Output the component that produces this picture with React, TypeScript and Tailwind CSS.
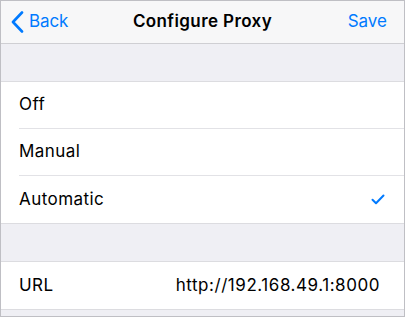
import React from 'react';

const options = ['Off', 'Manual', 'Automatic'];

const App: React.FC = () => {
  const selected = 'Automatic';

  return (
    <div
      className="w-[405px] h-[317px] border border-[#bfbfc4] bg-[#efeff4] overflow-hidden text-[17px] text-black"
      style={{ fontFamily: 'Inter, "Noto Sans", sans-serif' }}
    >
      <div className="h-[43px] bg-[#f7f7f8] border-b border-[#cfcfd3] flex items-center justify-between relative">
        <button className="flex items-center text-[#007aff] pl-[10px] gap-[5px]">
          <svg width="13" height="22" viewBox="0 0 13 22" fill="none">
            <path d="M11 1.5L2 11l9 9.5" stroke="#007aff" strokeWidth="2.6" strokeLinecap="round" strokeLinejoin="round" />
          </svg>
          <span className="tracking-[-0.1px]">Back</span>
        </button>
        <div className="absolute left-0 right-0 text-center font-semibold pointer-events-none tracking-[0.4px]">
          Configure Proxy
        </div>
        <button className="text-[#007aff] pr-[17px]">Save</button>
      </div>

      <div className="h-[37px]" />

      <div className="bg-white border-t border-b border-[#dcdce0]">
        {options.map((opt, i) => (
          <div key={opt} className="pl-[18px]">
            <div
              className={`h-[47px] flex items-center justify-between pr-[19px] ${
                i < options.length - 1 ? 'border-b border-[#e2e2e6]' : ''
              }`}
            >
              <span className="tracking-[0.45px]">{opt}</span>
              {opt === selected && (
                <svg width="14" height="11" viewBox="0 0 14 11" fill="none">
                  <path d="M1.5 5.8L5 9.2L12.5 1.5" stroke="#007aff" strokeWidth="2" strokeLinecap="round" strokeLinejoin="round" />
                </svg>
              )}
            </div>
          </div>
        ))}
      </div>

      <div className="h-[37px]" />

      <div className="bg-white border-t border-b border-[#dcdce0]">
        <div className="h-[47px] flex items-center justify-between pl-[18px] pr-[24px]">
          <span className="tracking-[0.45px]">URL</span>
          <span className="tracking-[0.55px]">http://192.168.49.1:8000</span>
        </div>
      </div>
    </div>
  );
};

export default App;
